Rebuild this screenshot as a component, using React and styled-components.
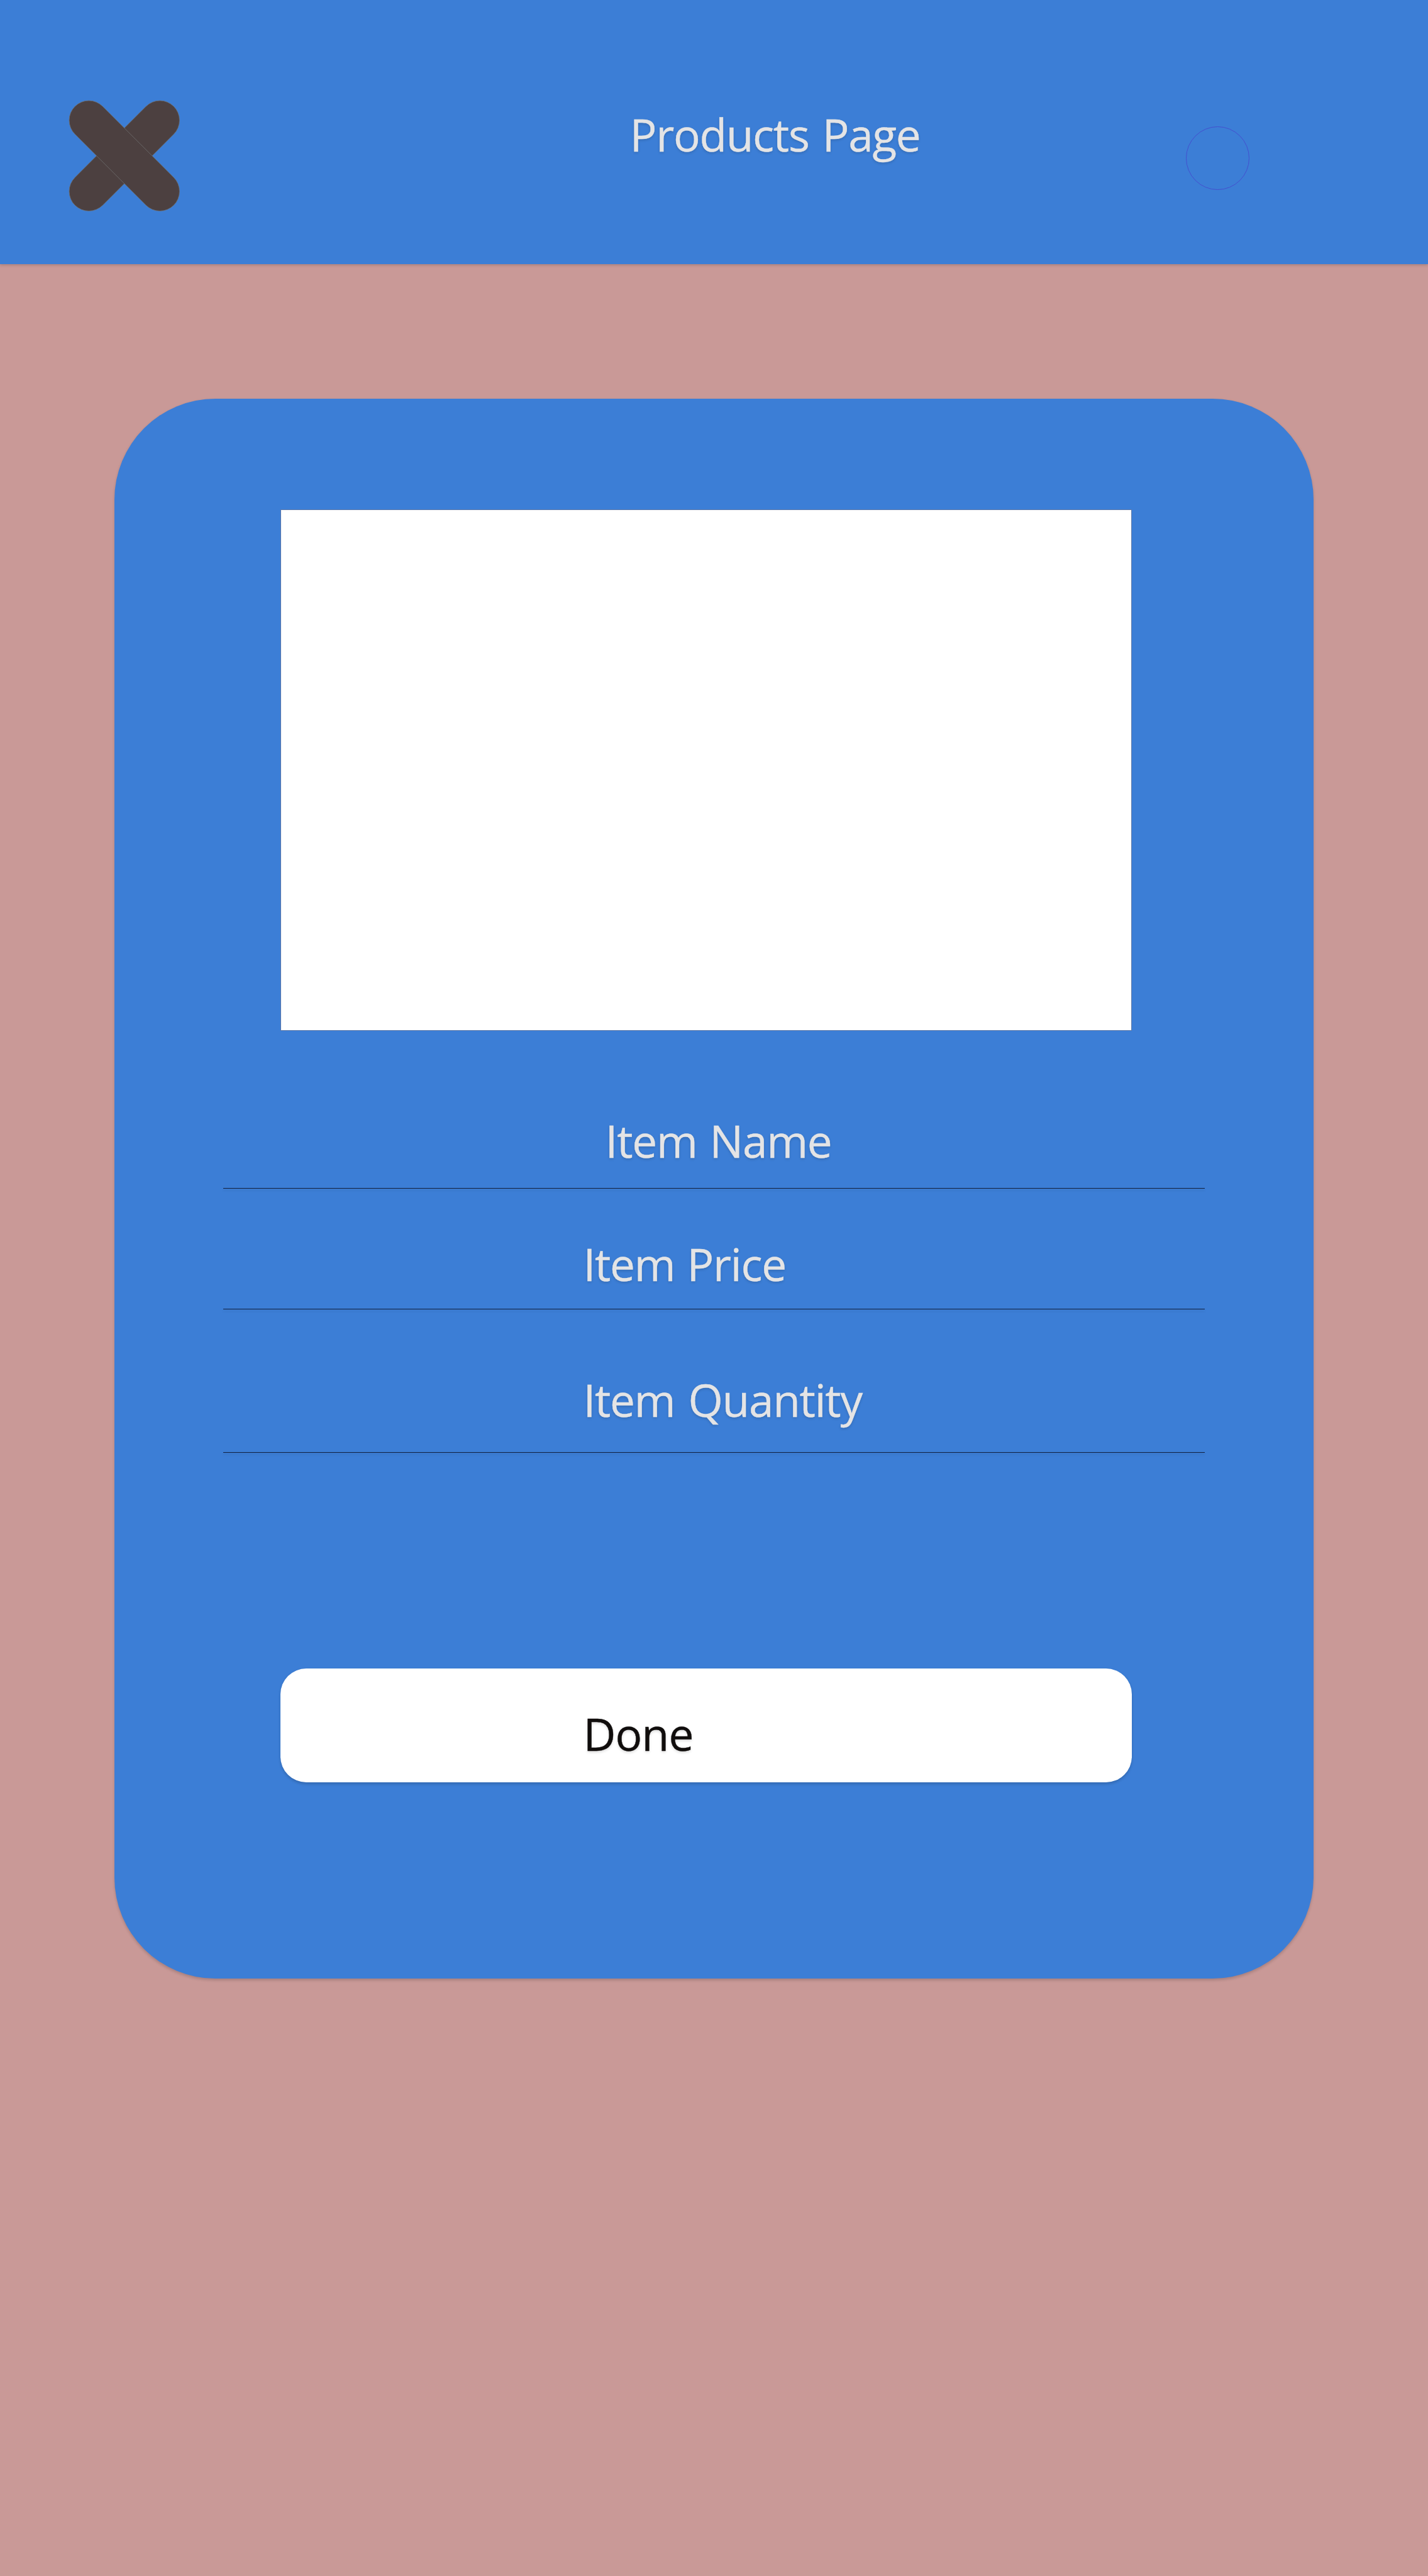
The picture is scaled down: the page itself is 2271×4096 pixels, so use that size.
import React from "react";
import styled, { createGlobalStyle } from "styled-components";

// The artboard is 3096 units wide; u() turns artboard units into pixels.
const SCALE = 2271 / 3096;
const u = (n) => `${(n * SCALE).toFixed(3)}px`;

const blue = "#3c7ed6";
const softShadow = `0 ${u(3)} ${u(6)} rgba(0, 0, 0, 0.16)`;

const GlobalStyle = createGlobalStyle`
  *, *::before, *::after { box-sizing: border-box; }
  html, body { margin: 0; background: #c99997; }
`;

const Page = styled.div`
  width: 2271px;
  height: 4096px;
  overflow: hidden;
  display: flex;
  flex-direction: column;
  align-items: flex-start;
  background: #c99997;
  font-family: "Open Sans", "Noto Sans", sans-serif;
`;

const Header = styled.header`
  width: 100%;
  height: ${u(572)};
  flex: none;
  display: flex;
  align-items: flex-start;
  padding-left: ${u(148)};
  background: ${blue};
  box-shadow: ${softShadow};
`;

const CloseButton = styled.button`
  display: block;
  width: ${u(242)};
  height: ${u(242)};
  flex: none;
  margin-top: ${u(217)};
  padding: 0;
  border: 0;
  background: none;

  svg {
    display: block;
    width: 100%;
    height: 100%;
  }
`;

const Label = styled.span`
  display: block;
  color: ${(p) => p.$color || "#e4e4e5"};
  font-size: ${u(97)};
  font-weight: 400;
  line-height: ${u(132)};
  letter-spacing: ${(p) => u(p.$tracking || -1.75)};
  word-spacing: ${(p) => u(p.$wordGap || 0)};
  white-space: nowrap;
  text-shadow: ${softShadow};
  -webkit-text-stroke: 0.4px currentColor;
`;

const Title = styled(Label).attrs({ as: "h1" })`
  width: ${u(640)};
  margin: ${u(226.4)} 0 0 ${u(975.6)};
`;

const Avatar = styled.div`
  width: ${u(138)};
  height: ${u(138)};
  flex: none;
  margin: ${u(274)} 0 0 ${u(565.4)};
  border: 1px solid #444fcf;
  border-radius: 50%;
`;

const Card = styled.main`
  width: ${u(2600)};
  height: ${u(3424)};
  flex: none;
  margin: ${u(293)} 0 0 ${u(248)};
  padding: ${u(239)} ${u(235.5)} 0;
  display: flex;
  flex-direction: column;
  background: ${blue};
  border-radius: ${u(219)};
  box-shadow: ${softShadow};
`;

const Photo = styled.div`
  width: ${u(1845.5)};
  height: ${u(1130)};
  flex: none;
  margin-left: ${u(124.5)};
  background: #fff;
  border: 1px solid #6079a8;
`;

const Field = styled.div`
  height: ${(p) => u(p.$height)};
  flex: none;
  display: flex;
  flex-direction: column;
  justify-content: space-between;
  padding-top: ${(p) => u(p.$top)};

  ${Label} {
    padding-left: ${(p) => u(p.$left)};
  }
`;

const Rule = styled.div`
  height: 1px;
  background: #12203f;
  box-shadow: ${softShadow};
`;

const DoneButton = styled.button`
  width: ${u(1846)};
  height: ${u(246)};
  flex: none;
  margin: ${u(468)} 0 0 ${u(124.5)};
  padding: ${u(76)} 0 0 ${u(656.9)};
  border: 0;
  border-radius: ${u(56)};
  background: #fff;
  box-shadow: ${softShadow};
  font-family: inherit;
  text-align: left;
  display: flex;
  align-items: flex-start;
`;

const fields = [
  { label: "Item Name", height: 343, top: 173.4, left: 828.8, wordGap: 4 },
  { label: "Item Price", height: 262, top: 98, left: 780.9, wordGap: 2.6 },
  { label: "Item Quantity", height: 310, top: 130, left: 780.9, wordGap: 5.5 },
];

function CloseIcon() {
  return (
    <svg viewBox="-121 -121 242 242" fill="#4c4040" stroke="#707070" strokeWidth="1">
      <rect x="-151.5" y="-42.6" width="303" height="85.2" rx="42.6" transform="rotate(-45)" />
      <rect x="-151.5" y="-42.6" width="303" height="85.2" rx="42.6" transform="rotate(45)" />
    </svg>
  );
}

export default function App() {
  return (
    <Page>
      <GlobalStyle />
      <Header>
        <CloseButton aria-label="Close">
          <CloseIcon />
        </CloseButton>
        <Title $wordGap={5.4}>Products Page</Title>
        <Avatar />
      </Header>
      <Card>
        <Photo />
        {fields.map((f) => (
          <Field key={f.label} $height={f.height} $top={f.top} $left={f.left}>
            <Label $wordGap={f.wordGap}>{f.label}</Label>
            <Rule />
          </Field>
        ))}
        <DoneButton>
          <Label $color="#100d0c" $tracking={-1.1}>Done</Label>
        </DoneButton>
      </Card>
    </Page>
  );
}
